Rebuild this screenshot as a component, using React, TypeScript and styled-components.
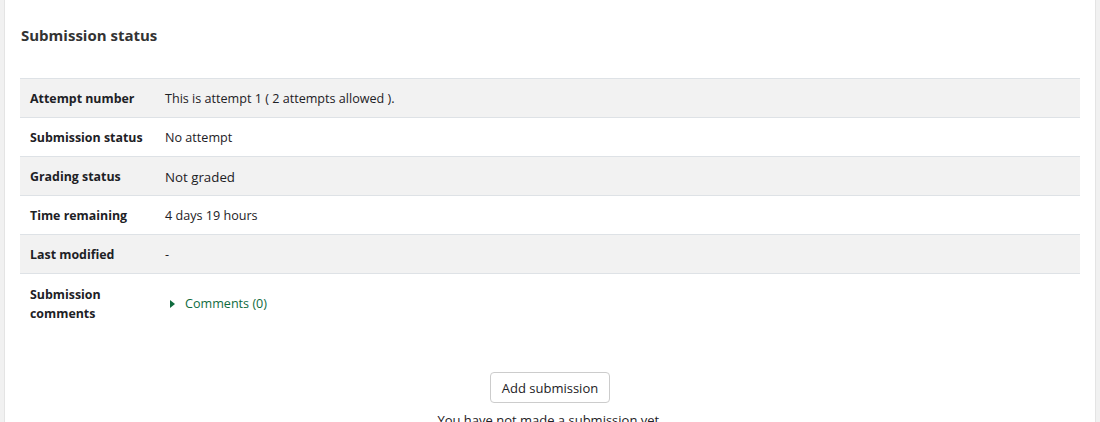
import React from "react";
import styled, { createGlobalStyle } from "styled-components";

const GlobalStyle = createGlobalStyle`
  html, body {
    margin: 0;
    padding: 0;
    background: #fff;
  }
  body {
    font-family: "Open Sans", "Noto Sans", sans-serif;
    color: #1d2125;
  }
`;

const Page = styled.div`
  height: 422px;
  overflow: hidden;
  display: flex;
`;

const SideEdge = styled.div<{ $side: "left" | "right" }>`
  width: 4px;
  flex: 0 0 4px;
  background: #f1f1f1;
  ${(p) => (p.$side === "left" ? "border-right: 1px solid #e4e4e4;" : "border-left: 1px solid #e4e4e4;")}
`;

const Main = styled.div`
  flex: 1;
  padding: 0 15px;
`;

const Heading = styled.h3`
  margin: 0;
  padding: 25px 0 0 1px;
  font-size: 15px;
  font-weight: 700;
  color: #333;
  line-height: 20px;
`;

const Table = styled.table`
  margin-top: 33px;
  width: 100%;
  border-collapse: collapse;
  font-size: 12.6px;
`;

const Row = styled.tr<{ $striped?: boolean }>`
  background: ${(p) => (p.$striped ? "#f2f2f2" : "#fff")};
  border-top: 1px solid #dee2e6;
`;

const Label = styled.th<{ $multiline?: boolean }>`
  width: 115px;
  text-align: left;
  font-weight: 700;
  font-size: 12.4px;
  padding: 11px 10px 9px;
  line-height: ${(p) => (p.$multiline ? "19px" : "18px")};
  vertical-align: middle;
  color: #1d2125;
`;

const Value = styled.td<{ $large?: boolean }>`
  padding: 11px 10px 9px;
  line-height: 18px;
  font-size: ${(p) => (p.$large ? "13.3px" : "12.6px")};
  color: #1d2125;
`;

const CommentsToggle = styled.a`
  display: inline-flex;
  align-items: center;
  gap: 10px;
  padding-left: 5px;
  color: #0f6b3e;
  text-decoration: none;
`;

const Actions = styled.div`
  margin-top: 40px;
  display: flex;
  flex-direction: column;
  align-items: center;
`;

const Button = styled.button`
  font-family: inherit;
  font-size: 13px;
  color: #1d2125;
  background: #fff;
  border: 1px solid #ccc;
  border-radius: 4px;
  padding: 0 11px;
  height: 31px;
`;

const Note = styled.p`
  margin: 8px 0 0;
  font-size: 13px;
`;

const rows: { label: string; value: React.ReactNode; large?: boolean }[] = [
  { label: "Attempt number", value: "This is attempt 1 ( 2 attempts allowed )." },
  { label: "Submission status", value: "No attempt" },
  { label: "Grading status", value: "Not graded", large: true },
  { label: "Time remaining", value: "4 days 19 hours" },
  { label: "Last modified", value: "-" },
];

const App: React.FC = () => {
  return (
    <Page>
      <GlobalStyle />
      <SideEdge $side="left" />
      <Main>
        <Heading>Submission status</Heading>
        <Table>
          <tbody>
            {rows.map((r, i) => (
              <Row key={r.label} $striped={i % 2 === 0}>
                <Label>{r.label}</Label>
                <Value $large={r.large}>{r.value}</Value>
              </Row>
            ))}
            <Row>
              <Label $multiline>Submission comments</Label>
              <Value>
                <CommentsToggle href="#">
                  <svg width="5" height="8" viewBox="0 0 5 8">
                    <path d="M0 0 L5 4 L0 8 Z" fill="#0f6b3e" />
                  </svg>
                  Comments (0)
                </CommentsToggle>
              </Value>
            </Row>
          </tbody>
        </Table>
        <Actions>
          <Button>Add submission</Button>
          <Note>You have not made a submission yet.</Note>
        </Actions>
      </Main>
      <SideEdge $side="right" />
    </Page>
  );
};

export default App;
